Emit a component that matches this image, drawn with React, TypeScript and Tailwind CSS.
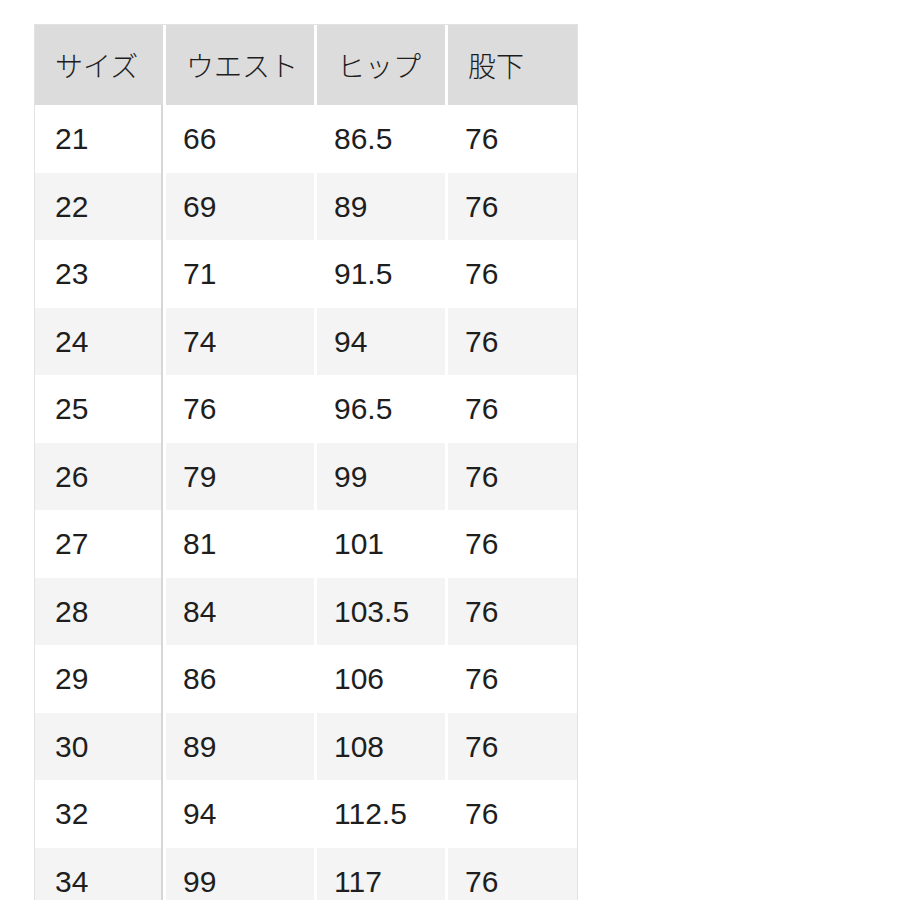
const headers = ["サイズ", "ウエスト", "ヒップ", "股下"];

const rows: string[][] = [
  ["21", "66", "86.5", "76"],
  ["22", "69", "89", "76"],
  ["23", "71", "91.5", "76"],
  ["24", "74", "94", "76"],
  ["25", "76", "96.5", "76"],
  ["26", "79", "99", "76"],
  ["27", "81", "101", "76"],
  ["28", "84", "103.5", "76"],
  ["29", "86", "106", "76"],
  ["30", "89", "108", "76"],
  ["32", "94", "112.5", "76"],
  ["34", "99", "117", "76"],
];

const cols = "grid grid-cols-[128px_148px_128px_129px] gap-x-[3px]";

export default function App() {
  return (
    <div
      className="w-[900px] h-[900px] overflow-hidden bg-white text-[#1e1e1e] pt-[24px] pl-[34px]"
      style={{ fontFamily: '"Liberation Sans", "Noto Sans CJK JP", sans-serif' }}
    >
      <div className="w-[544px] border-x border-t border-[#e2e2e2]">
        <div className={cols}>
          {headers.map((h) => (
            <div key={h} className="h-[80px] bg-[#dcdcdc] flex items-center pl-[20px] text-[28px]" style={{ fontFamily: '"Noto Sans CJK JP", sans-serif', fontWeight: 300 }}>
              {h}
            </div>
          ))}
        </div>
        {rows.map((r, i) => (
          <div key={r[0]} className={cols}>
            {r.map((c, j) => (
              <div
                key={j}
                className={`h-[67.5px] flex items-center text-[30px] ${i % 2 ? "bg-[#f4f4f4]" : "bg-white"} ${j === 0 ? "border-r-2 border-[#d6d6d6] pl-[20px]" : "pl-[17px]"}`}
              >
                {c}
              </div>
            ))}
          </div>
        ))}
      </div>
    </div>
  );
}
